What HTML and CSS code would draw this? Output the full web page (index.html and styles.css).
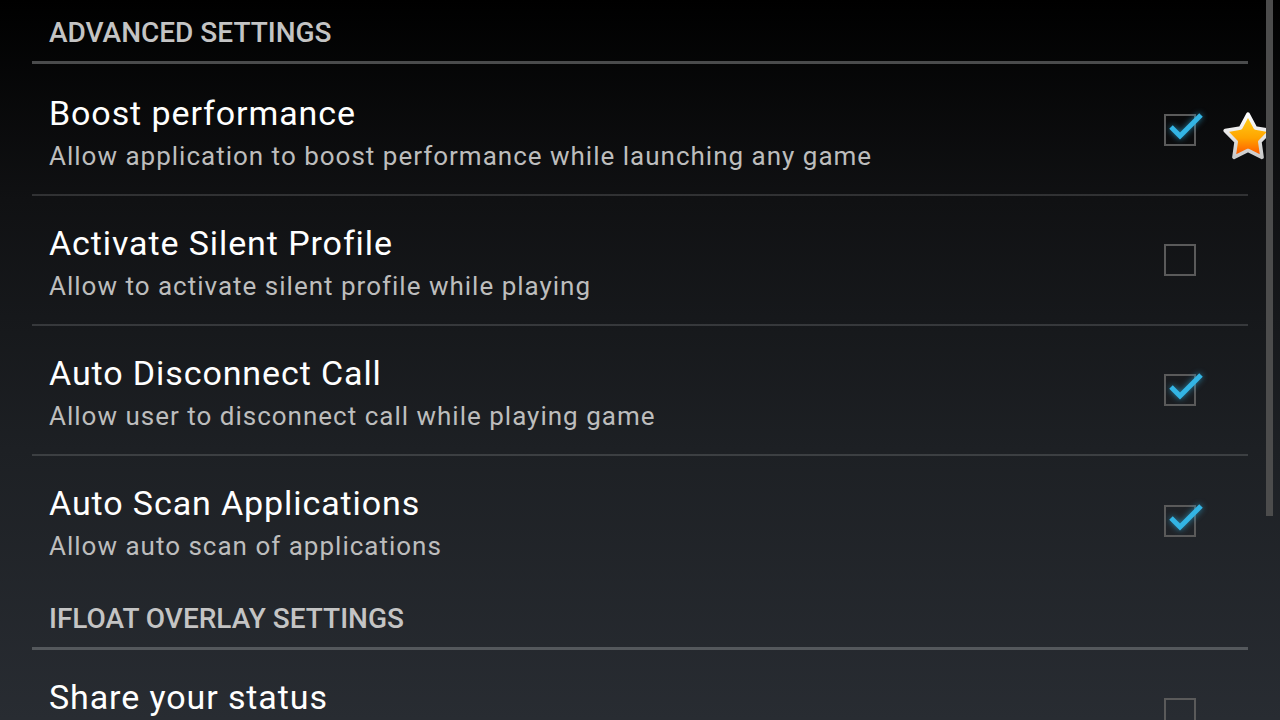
FILE: index.html
```html
<!DOCTYPE html>
<html lang="en">
<head>
    <meta charset="UTF-8">
    <title>Advanced Settings</title>
    <link rel="stylesheet" href="styles.css">
</head>
<body>
    <div class="screen">
        <div class="list">
            <div class="category first">ADVANCED SETTINGS</div>

            <div class="pref">
                <div class="pref-text">
                    <div class="pref-title">Boost performance</div>
                    <div class="pref-summary">Allow application to boost performance while launching any game</div>
                </div>
                <span class="checkbox checked">
                    <svg class="tick" width="44" height="34" viewBox="0 0 44 34"><polyline points="7,13 16,22 37,1"/></svg>
                </span>
                <svg class="star" width="54" height="54" viewBox="0 0 52 52">
                    <defs>
                        <linearGradient id="starFill" x1="0" y1="0" x2="0" y2="1">
                            <stop offset="0" stop-color="#ffd21a"/>
                            <stop offset="0.55" stop-color="#ffa400"/>
                            <stop offset="1" stop-color="#ff4f00"/>
                        </linearGradient>
                        <linearGradient id="starEdge" x1="0" y1="0" x2="0" y2="1">
                            <stop offset="0" stop-color="#ffffff"/>
                            <stop offset="1" stop-color="#c9c9c9"/>
                        </linearGradient>
                    </defs>
                    <polygon points="26,3 33.1,16.3 47.9,18.9 37.4,29.7 39.5,44.6 26,38 12.5,44.6 14.6,29.7 4.1,18.9 18.9,16.3" fill="url(#starFill)" stroke="url(#starEdge)" stroke-width="3.5" stroke-linejoin="round"/>
                </svg>
            </div>

            <div class="pref">
                <div class="pref-text">
                    <div class="pref-title">Activate Silent Profile</div>
                    <div class="pref-summary">Allow to activate silent profile while playing</div>
                </div>
                <span class="checkbox"></span>
            </div>

            <div class="pref">
                <div class="pref-text">
                    <div class="pref-title">Auto Disconnect Call</div>
                    <div class="pref-summary">Allow user to disconnect call while playing game</div>
                </div>
                <span class="checkbox checked">
                    <svg class="tick" width="44" height="34" viewBox="0 0 44 34"><polyline points="7,13 16,22 37,1"/></svg>
                </span>
            </div>

            <div class="pref last">
                <div class="pref-text">
                    <div class="pref-title">Auto Scan Applications</div>
                    <div class="pref-summary">Allow auto scan of applications</div>
                </div>
                <span class="checkbox checked">
                    <svg class="tick" width="44" height="34" viewBox="0 0 44 34"><polyline points="7,13 16,22 37,1"/></svg>
                </span>
            </div>

            <div class="category">IFLOAT OVERLAY SETTINGS</div>

            <div class="pref">
                <div class="pref-text">
                    <div class="pref-title">Share your status</div>
                </div>
                <span class="checkbox"></span>
            </div>
        </div>
        <div class="scrollbar"></div>
    </div>
</body>
</html>
```

FILE: styles.css
```css
body {
    margin: 0;
    background: #000;
    font-family: Roboto, "Liberation Sans", sans-serif;
}
.screen {
    position: relative;
    width: 1280px;
    height: 720px;
    overflow: hidden;
    background: linear-gradient(to bottom, #000000 0px, #101113 200px, #1d2024 450px, #282c32 720px);
}
.list {
    padding: 0 32px;
}
.category {
    height: 64px;
    box-sizing: border-box;
    padding: 16px 0 0 17px;
    border-bottom: 3px solid #54585c;
    color: #c4c4c4;
    font-size: 28px;
    font-weight: 500;
    line-height: 34px;
}
.category.first {
    margin-bottom: 2px;
    border-bottom-color: #4a4b4c;
}
.pref {
    position: relative;
    display: flex;
    align-items: flex-start;
    height: 130px;
    box-sizing: border-box;
    padding: 26px 52px 0 17px;
    border-bottom: 2px solid rgba(255, 255, 255, 0.14);
}
.pref.last {
    border-bottom: none;
}
.pref-text {
    flex: 1;
}
.pref-title {
    color: #ffffff;
    font-size: 34px;
    letter-spacing: 0.9px;
    line-height: 42px;
}
.pref-summary {
    margin-top: 5px;
    color: #bdbdbd;
    font-size: 26px;
    letter-spacing: 1px;
    line-height: 34px;
}
.checkbox {
    position: relative;
    align-self: center;
    margin-top: -26px;
    width: 32px;
    height: 32px;
    box-sizing: border-box;
    border: 2px solid #5a5a5a;
}
.tick {
    position: absolute;
    left: -2px;
    top: -2px;
    overflow: visible;
    filter: drop-shadow(0 0 3px rgba(51, 181, 229, 0.7));
}
.tick polyline {
    fill: none;
    stroke: #33b5e5;
    stroke-width: 5;
}
.star {
    position: absolute;
    right: -27px;
    top: 45px;
}
.scrollbar {
    position: absolute;
    left: 1266px;
    top: 0;
    width: 7px;
    height: 516px;
    background: #4c4c4c;
}
```
